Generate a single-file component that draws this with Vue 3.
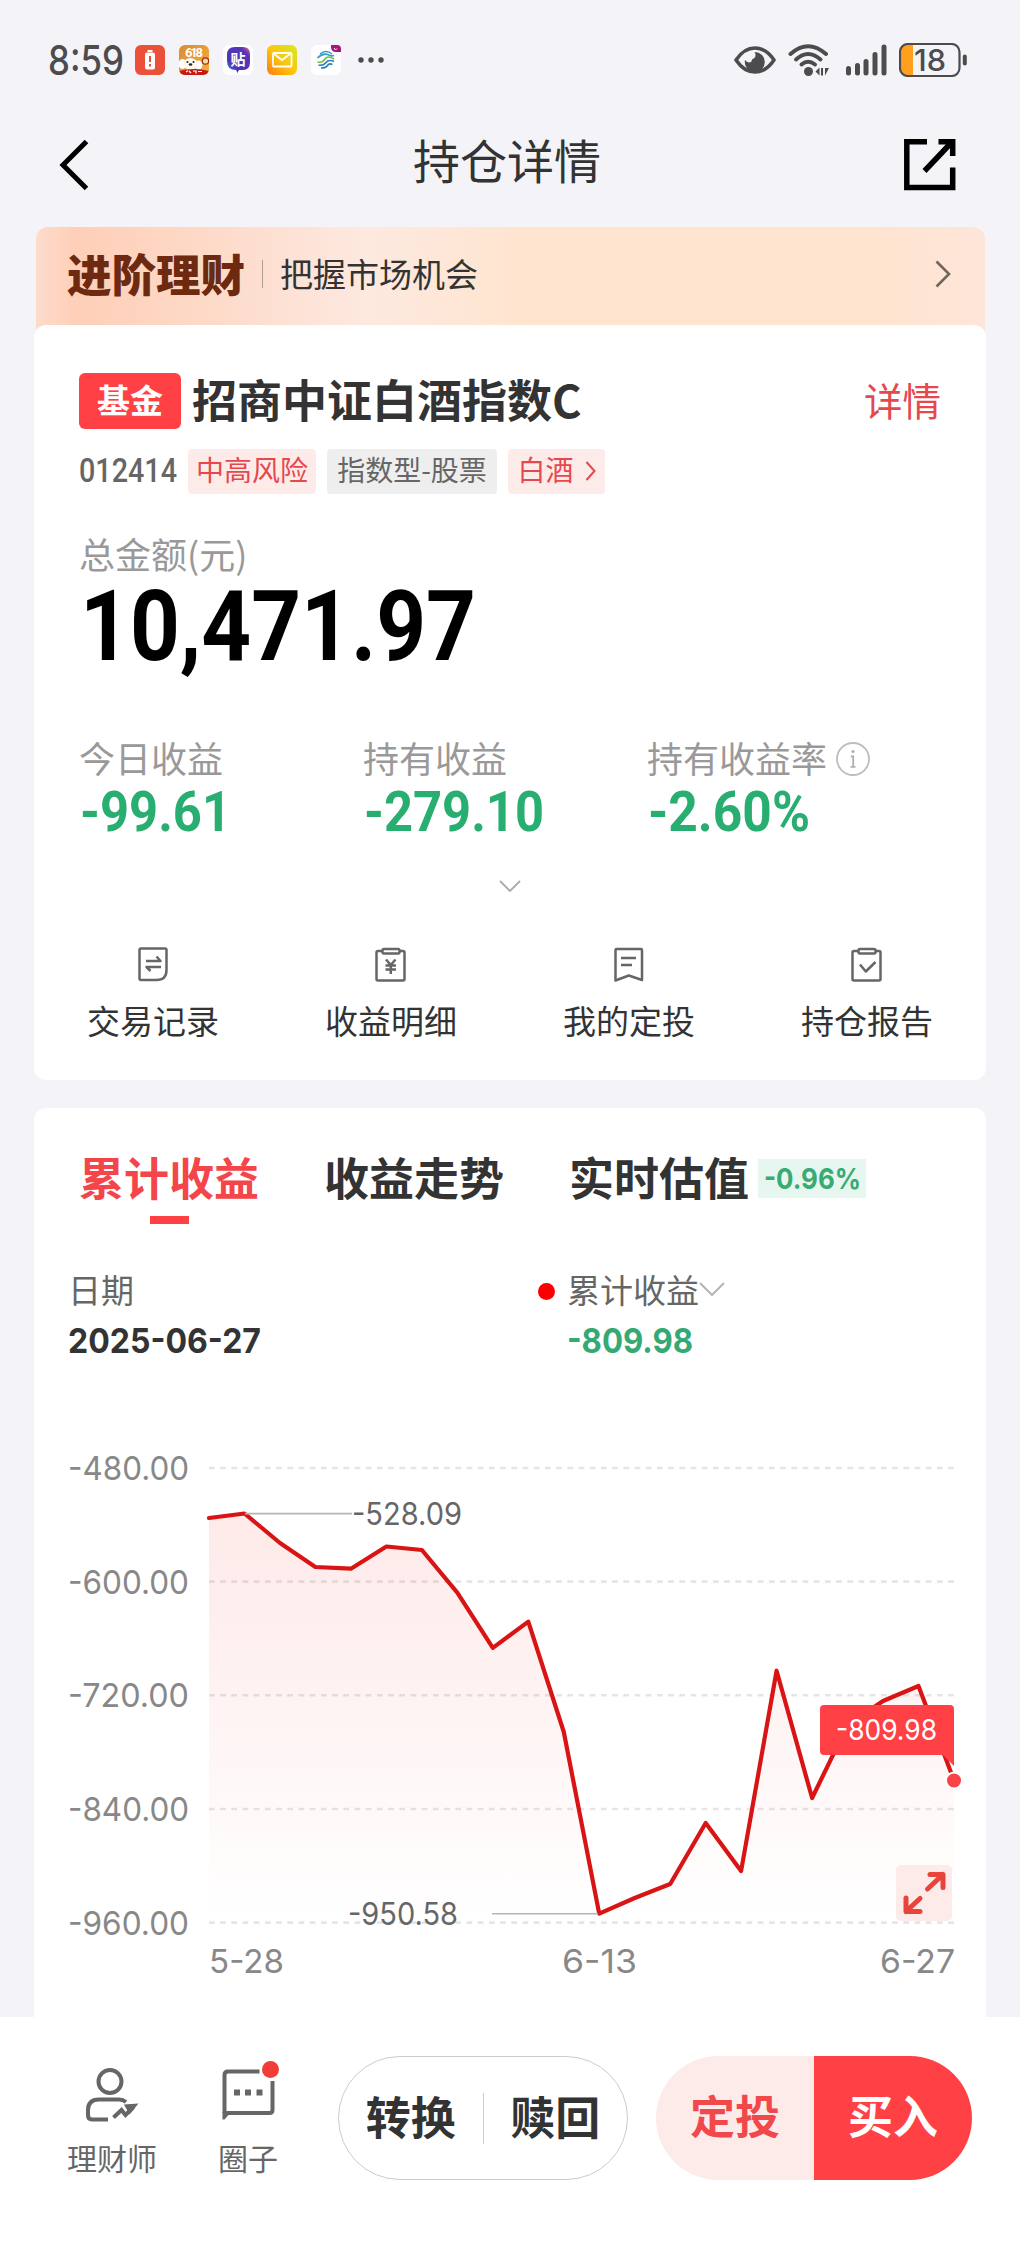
<template>
  <div class="screen">
    <header class="status-bar">
      <fit-text class="clock" text="8:59" :width="76" :height="30" />
      <div class="app-icons">
        <svg width="30" height="30" viewBox="0 0 30 30">
          <rect width="30" height="30" rx="6" fill="#ea5138" />
          <rect x="12.5" y="5" width="5" height="2" fill="#fff" />
          <rect x="10" y="7.5" width="10" height="17" rx="2" fill="#fff" />
          <path d="M15 11v6M15 19v2.5" stroke="#ea5138" stroke-width="2" />
        </svg>
        <svg width="30" height="30" viewBox="0 0 30 30">
          <defs>
            <linearGradient id="promoBg" x1="0" y1="0" x2="1" y2="1">
              <stop offset="0" stop-color="#dc8a35" />
              <stop offset="1" stop-color="#f4b03a" />
            </linearGradient>
            <clipPath id="promoClip"><rect width="30" height="30" rx="6" /></clipPath>
          </defs>
          <g clip-path="url(#promoClip)">
            <rect width="30" height="30" fill="url(#promoBg)" />
            <text x="6" y="12" class="promo-number" textLength="18">618</text>
            <ellipse cx="3.5" cy="19" rx="4" ry="5" fill="#fff" />
            <ellipse cx="19.5" cy="20" rx="4" ry="4.5" fill="#fff" />
            <ellipse cx="11.5" cy="19" rx="7" ry="6" fill="#fffaf0" />
            <circle cx="8.5" cy="17" r="1" fill="#222" />
            <circle cx="14.5" cy="17" r="1" fill="#222" />
            <ellipse cx="11.5" cy="19.5" rx="1.8" ry="1.2" fill="#222" />
            <circle cx="26.5" cy="16" r="3.2" fill="#f7d9a0" stroke="#9c2a14" stroke-width="1.2" />
            <path d="M0 26q15-4 30 0v4H0z" fill="#c31a14" />
            <path d="M7 27l2-1.5M10 26l2 2M14 26h3v2.5M19 26.5h4" stroke="#fff" stroke-width="1.2" fill="none" />
          </g>
        </svg>
        <svg width="30" height="30" viewBox="0 0 30 30">
          <defs>
            <linearGradient id="barBg" x1="0" y1="1" x2="1" y2="0">
              <stop offset="0" stop-color="#2a8cf5" />
              <stop offset="0.3" stop-color="#4b35b8" />
              <stop offset="0.8" stop-color="#5a35b5" />
              <stop offset="1" stop-color="#ff6a7a" />
            </linearGradient>
          </defs>
          <rect width="30" height="30" rx="6" fill="#fff" />
          <path d="M12 2h8q7 0 7 7v8q0 8-7 8h-4l-1.500 3-1.500-3q-9 0-9-9v-6q0-8 8-8z" fill="url(#barBg)" />
          <text x="7.500" y="19.500" class="bar-glyph">贴</text>
        </svg>
        <svg width="30" height="30" viewBox="0 0 30 30">
          <defs>
            <linearGradient id="mailBg" x1="0" y1="1" x2="1" y2="0">
              <stop offset="0" stop-color="#ff7a0a" />
              <stop offset="0.5" stop-color="#fcc70d" />
              <stop offset="1" stop-color="#d3ea1e" />
            </linearGradient>
          </defs>
          <rect width="30" height="30" rx="6" fill="url(#mailBg)" />
          <rect x="6" y="8" width="18.5" height="13.5" rx="1" fill="none" stroke="#fff" stroke-width="1.8" />
          <path d="M7 9l8 6 8-6" fill="none" stroke="#fff" stroke-width="1.8" />
        </svg>
        <svg width="30" height="30" viewBox="0 0 30 30">
          <rect width="30" height="30" rx="6" fill="#fff" />
          <g fill="none" stroke-width="1.6">
            <path d="M9 9q6-5 12 0M6.500 13q5-5 10-3.500 4 2 6.500 1" stroke="#2f9bd0" />
            <path d="M6.500 17q5 1 7.500-3t9 0" stroke="#7dba4c" />
            <path d="M7.500 20q5 1 7.500-2.500t8-1M10 23q5 0 6.500-2.500t5-1" stroke="#2680c0" />
          </g>
          <path d="M20 0h6q4 0 4 4v3h-5q-5 0-5-5z" fill="#a8157c" />
          <path d="M23 3l1.500 2L26 3.500" stroke="#fff" fill="none" />
        </svg>
      </div>
      <svg class="more-dots" width="26" height="6" viewBox="0 0 26 6">
        <circle cx="3" cy="3" r="2.7" />
        <circle cx="13" cy="3" r="2.7" />
        <circle cx="23" cy="3" r="2.7" />
      </svg>
      <div class="status-right">
        <svg width="42" height="28" viewBox="0 0 42 28">
          <path d="M2 14Q10 2 21 2t19 12Q32 26 21 26T2 14z" fill="none" stroke="#4c4c4e" stroke-width="3.6" stroke-linejoin="round" />
          <path d="M20.500 6A10 10 0 1 1 11 14q3 4 6.500 1.500 0-1.500 1-2.500 3-1 3-4 0-1.800-1-3z" fill="#4c4c4e" />
        </svg>
        <svg class="wifi" width="42" height="32" viewBox="0 0 42 32">
          <g fill="none" stroke="#4c4c4e" stroke-width="4" stroke-linecap="round">
            <path d="M2.500 10Q20 -5.500 38 10" />
            <path d="M8 15.500Q20 4.500 32.500 15.500" />
            <path d="M13.500 20.500q6.500-5.500 13.500 0" />
          </g>
          <circle cx="20.500" cy="27.500" r="4.500" fill="#4c4c4e" />
          <path d="M27.500 27.500l4-4v8zM41 24l-4 7.500V24zM33 24h2v7.500h-2z" fill="#4c4c4e" />
        </svg>
        <svg class="signal" width="41" height="32" viewBox="0 0 41 32">
          <g stroke="#4c4c4e" stroke-width="5" stroke-linecap="round">
            <path d="M2.500 24.500V29M11.500 21.500V29M20 17.500V29M29 10.500V29M38 3V29" />
          </g>
        </svg>
        <svg width="68" height="34" viewBox="0 0 68 34">
          <path d="M9 1.500h5v31H9q-7 0-7-7v-17q0-7 7-7z" fill="#ff9f1e" />
          <rect x="1" y="1" width="59.5" height="32" rx="8" fill="none" stroke="#4c4c4e" stroke-width="2.2" />
          <path d="M65.800 13.500v7" stroke="#4c4c4e" stroke-width="4" stroke-linecap="round" />
          <text x="15" y="28" class="battery-level" textLength="32" lengthAdjust="spacingAndGlyphs">18</text>
        </svg>
      </div>
    </header>

    <nav class="nav-bar">
      <svg width="30" height="52" viewBox="0 0 30 52">
        <path d="M27.500 2.500L4 26l23.500 23.500" fill="none" stroke="#000" stroke-width="5" />
      </svg>
      <h1 class="nav-title">持仓详情</h1>
      <svg width="52" height="52" viewBox="0 0 52 52" fill="none" stroke="#000" stroke-width="5.5">
        <path d="M23 2.800H2.800V48.500H48.700V28.500" />
        <path d="M34.500 2.800H48.700V17" />
        <path d="M47 4L20.500 32" />
      </svg>
    </nav>

    <section class="banner">
      <span class="banner-title">进阶理财</span>
      <span class="banner-line"></span>
      <span class="banner-text">把握市场机会</span>
      <svg class="banner-arrow" width="16" height="28" viewBox="0 0 16 28">
        <path d="M1.500 1.500L14 14 1.500 26.500" fill="none" stroke="#6f655c" stroke-width="2.6" />
      </svg>
    </section>

    <section class="card summary">
      <div class="fund-head">
        <span class="fund-type">基金</span>
        <h2 class="fund-name">招商中证白酒指数C</h2>
        <span class="fund-link">详情</span>
      </div>
      <div class="fund-tags">
        <fit-text class="fund-code" text="012414" :width="98" :height="24" />
        <span class="tag tag-risk">中高风险</span>
        <span class="tag tag-kind">指数型-股票</span>
        <span class="tag tag-theme">
          白酒
          <svg width="11" height="20" viewBox="0 0 11 20">
            <path d="M1.500 1L9.500 10l-8 9" fill="none" stroke="#e5484d" stroke-width="2" />
          </svg>
        </span>
      </div>
      <p class="total-label">总金额(元)</p>
      <fit-text class="total-value" text="10,471.97" :width="396" :height="70" />

      <div class="stats">
        <div v-for="item in stats" :key="item.label" class="stat">
          <div class="stat-label">
            {{ item.label }}
            <svg v-if="item.info" class="stat-info" width="34" height="34" viewBox="0 0 34 34">
              <circle cx="17" cy="17" r="16" fill="none" stroke="#bdbdbd" stroke-width="1.8" />
              <circle cx="17" cy="9.5" r="1.6" fill="#b0b0b0" />
              <path d="M14.800 14.500h2.400v10M14.500 24.800h5" fill="none" stroke="#b0b0b0" stroke-width="1.8" />
            </svg>
          </div>
          <fit-text class="stat-value" :text="item.value" :width="item.width" :height="39" />
        </div>
      </div>

      <svg class="expand-arrow" width="22" height="12" viewBox="0 0 22 12">
        <path d="M1 1l10 10L21 1" fill="none" stroke="#aaa" stroke-width="1.8" />
      </svg>

      <div class="shortcuts">
        <div v-for="item in shortcuts" :key="item.label" class="shortcut">
          <svg width="32" height="35" viewBox="0 0 32 35" fill="none" stroke="#666" stroke-width="2.5" stroke-linejoin="round">
            <template v-if="item.icon === 'record'">
              <path d="M4 1.500h24q1.500 0 1.500 1.500v20q0 10-10 10H4q-1.500 0-1.500-1.500V3q0-1.500 1.500-1.500z" />
              <path d="M9 14h14.500l-4-4.500M24 20H9.500l4 4" />
            </template>
            <template v-else-if="item.icon === 'profit'">
              <rect x="1.5" y="4" width="28" height="29.5" rx="1.5" />
              <rect x="7.5" y="2" width="17" height="4.5" rx="1.5" fill="#fff" />
              <path d="M11 12.500l4.800 5.500 4.700-5.500M15.800 18v9M10.500 18.500h10.500M10.500 22.500h10.500" />
            </template>
            <template v-else-if="item.icon === 'plan'">
              <path d="M3 2h25q1 0 1 1v30l-13.200-4.500L2.500 33.500V3z" />
              <path d="M8 11h15M8 18h11" />
            </template>
            <template v-else>
              <rect x="1.5" y="4" width="28" height="29.5" rx="1.5" />
              <rect x="7.5" y="2" width="17" height="4.5" rx="1.5" fill="#fff" />
              <path d="M9 17.500l5.800 7L24.500 15" />
            </template>
          </svg>
          <span class="shortcut-label">{{ item.label }}</span>
        </div>
      </div>
    </section>

    <section class="card trend">
      <div class="tabs">
        <div
          v-for="(tab, index) in tabs"
          :key="tab"
          class="tab"
          :class="{ active: index === activeTab }"
          @click="activeTab = index"
        >
          {{ tab }}
        </div>
        <span class="estimate">
          <fit-text text="-0.96%" :width="97" :height="21" />
        </span>
      </div>

      <div class="legend">
        <div class="legend-col">
          <span class="legend-label">日期</span>
          <fit-text class="legend-date" text="2025-06-27" :width="193" :height="25" />
        </div>
        <div class="legend-col">
          <span class="legend-label">
            <i class="legend-dot"></i>
            累计收益
            <svg width="26" height="14" viewBox="0 0 26 14">
              <path d="M1 1l12 12L25 1" fill="none" stroke="#b5b5b5" stroke-width="2" />
            </svg>
          </span>
          <fit-text class="legend-value" text="-809.98" :width="126" :height="25" />
        </div>
      </div>

      <svg class="chart" width="952" height="577" viewBox="0 0 952 577">
        <defs>
          <linearGradient id="areaFill" gradientUnits="userSpaceOnUse" x1="0" y1="73" x2="0" y2="482">
            <stop offset="0" stop-color="#f03c32" stop-opacity="0.11" />
            <stop offset="1" stop-color="#f03c32" stop-opacity="0" />
          </linearGradient>
        </defs>
        <g v-for="tick in yTicks" :key="tick">
          <text class="axis-text" x="34" :y="toY(tick) + 12" textLength="121" lengthAdjust="spacingAndGlyphs">{{ tick.toFixed(2) }}</text>
          <line class="grid-line" :x1="plotLeft" :x2="plotRight" :y1="toY(tick)" :y2="toY(tick)" />
        </g>
        <polygon :points="areaPoints" fill="url(#areaFill)" />
        <polyline :points="linePoints" class="line" />
        <path d="M211 73.600h107M458 473.700h106" stroke="#b5b5b5" stroke-width="1.6" />
        <text class="note-text" x="318" y="85" textLength="110" lengthAdjust="spacingAndGlyphs">-528.09</text>
        <text class="note-text" x="314" y="485" textLength="110" lengthAdjust="spacingAndGlyphs">-950.58</text>
        <text class="axis-text" x="175" y="533" textLength="75" lengthAdjust="spacingAndGlyphs">5-28</text>
        <text class="axis-text" x="528" y="533" textLength="75" lengthAdjust="spacingAndGlyphs">6-13</text>
        <text class="axis-text" x="846" y="533" textLength="75" lengthAdjust="spacingAndGlyphs">6-27</text>
        <circle :cx="plotRight" :cy="toY(-809.98)" r="9" fill="#fff" />
        <circle :cx="plotRight" :cy="toY(-809.98)" r="7" fill="#fa4347" />
        <path d="M790 265h126q4 0 4 4v57l-11-11H790q-4 0-4-4v-42q0-4 4-4z" fill="#ff4145" />
        <text class="tip-text" x="802" y="300" textLength="101" lengthAdjust="spacingAndGlyphs">-809.98</text>
        <rect x="862" y="425" width="56" height="56" rx="5" fill="#fdebea" />
        <g fill="none" stroke="#e8443a" stroke-width="5" stroke-linecap="round" stroke-linejoin="round">
          <path d="M896 434.500h13v13M909 434.500l-15.500 14.500" />
          <path d="M872 458v13.500h14M872 471.500l14-13" />
        </g>
      </svg>
    </section>

    <footer class="action-bar">
      <div class="action-item advisor">
        <svg width="54" height="56" viewBox="0 0 54 56" fill="none" stroke="#666" stroke-width="4">
          <circle cx="25" cy="14.5" r="11.5" />
          <path d="M41 35q-3-2.500-7-2.500H14Q3 32.500 3 43v5q0 4.500 4 4.500h16" />
          <path d="M28.500 50.500l8-7.500 4 5 8-8" />
          <path d="M39 37.500l14.500-1-9 11z" fill="#666" stroke="none" />
        </svg>
        <span>理财师</span>
      </div>
      <div class="action-item circle">
        <svg width="58" height="60" viewBox="0 0 58 60" fill="none" stroke="#666" stroke-width="4">
          <path d="M37.500 10.500H6q-3.500 0-3.500 3.500v38M50.500 20v29q0 3-3 3H3" />
          <path d="M.500 51h8.500l-6.500 7.500h-2z" fill="#666" stroke="none" />
          <path d="M12 31.500h6M23 31.500h6M34.500 31.500h6" stroke-width="6" />
          <circle cx="48.5" cy="8.5" r="8.5" fill="#f23d36" stroke="none" />
        </svg>
        <span>圈子</span>
      </div>
      <div class="pill pill-plain">
        <button>转换</button>
        <button>赎回</button>
      </div>
      <div class="pill pill-primary">
        <button class="invest">定投</button>
        <button class="buy">买入</button>
      </div>
    </footer>
  </div>
</template>

<script setup>
import { ref, computed, h } from 'vue'

// Digits drawn to a fixed width; the box height equals the digit height
const FitText = (props) =>
  h('svg', { width: props.width, height: props.height, overflow: 'visible' }, [
    h(
      'text',
      {
        x: 0,
        y: props.height,
        fill: 'currentColor',
        textLength: props.width,
        lengthAdjust: 'spacingAndGlyphs'
      },
      props.text
    )
  ])
FitText.props = ['text', 'width', 'height']

const stats = [
  { label: '今日收益', value: '-99.61', width: 151 },
  { label: '持有收益', value: '-279.10', width: 180 },
  { label: '持有收益率', value: '-2.60%', width: 162, info: true }
]

const shortcuts = [
  { label: '交易记录', icon: 'record' },
  { label: '收益明细', icon: 'profit' },
  { label: '我的定投', icon: 'plan' },
  { label: '持仓报告', icon: 'report' }
]

const tabs = ['累计收益', '收益走势', '实时估值']
const activeTab = ref(0)

const plotLeft = 175
const plotRight = 920
const yTicks = [-480, -600, -720, -840, -960]
const values = [
  -532.8, -528.09, -559.2, -584.5, -586.3, -562.9, -566.6, -611.7, -670, -642.2, -758.8,
  -950.58, -934, -919.2, -854.8, -905.5, -694, -828.4, -751.4, -726, -710.2, -809.98
]

const toY = (value) => 28 + ((-480 - value) / 120) * 113.65
const toX = (index) => plotLeft + (index * (plotRight - plotLeft)) / (values.length - 1)

const linePoints = computed(() =>
  values.map((v, i) => `${toX(i).toFixed(1)},${toY(v).toFixed(1)}`).join(' ')
)
const areaPoints = computed(
  () => `${plotLeft},${toY(-960)} ${linePoints.value} ${plotRight},${toY(-960)}`
)
</script>

<style>
body {
  margin: 0;
  background: #f3f3f8;
}
</style>

<style scoped>
.screen {
  display: flex;
  flex-direction: column;
  width: 1020px;
  height: 2250px;
  overflow: hidden;
  background: #f3f3f8;
  color: #333;
  font-family: "Noto Sans CJK SC", sans-serif;
}

.screen * {
  box-sizing: border-box;
}

svg {
  flex: none;
  display: block;
}

h1,
h2,
p {
  margin: 0;
}

.status-bar {
  flex: none;
  display: flex;
  align-items: center;
  height: 120px;
  padding: 0 53px 0 48px;
}

.clock {
  color: #4c4c4e;
  font-family: Inter, sans-serif;
  font-size: 41px;
  font-weight: 500;
}

.app-icons {
  display: flex;
  gap: 14px;
  margin-left: 11px;
}

.promo-number {
  fill: #fff;
  font: 700 13px Roboto, sans-serif;
}

.bar-glyph {
  fill: #fff;
  font-size: 15px;
  font-weight: 700;
}

.more-dots {
  margin-left: 17px;
  fill: #4c4c4e;
}

.status-right {
  display: flex;
  align-items: center;
  margin-left: auto;
}

.wifi {
  margin-left: 12px;
}

.signal {
  margin: 0 12px 0 16px;
}

.battery-level {
  fill: #4c4c4e;
  font: 500 30px Inter, sans-serif;
}

.nav-bar {
  flex: none;
  display: flex;
  align-items: center;
  justify-content: space-between;
  height: 90px;
  padding: 0 64px 0 59px;
}

.nav-title {
  padding: 0 0 12px 21px;
  font-size: 47px;
  font-weight: 400;
  line-height: 60px;
}

.banner {
  flex: none;
  display: flex;
  align-items: center;
  height: 112px;
  margin: 17px 35px -14px 36px;
  padding: 0 34px 18px 31px;
  border-radius: 12px 12px 0 0;
  background: linear-gradient(90deg, #fddccb 0, #ffcfb8 40px, #fdd8c5 150px, #fde9e0 330px, #ffe5d0 480px, #ffe4cf 840px, #fde5d8 100%);
}

.banner-title {
  padding-bottom: 3px;
  color: #6e2911;
  font-size: 44.5px;
  font-weight: 900;
  line-height: 60px;
}

.banner-line {
  width: 1px;
  height: 28px;
  margin: 0 17px;
  background: #b09a8e;
}

.banner-text {
  padding-bottom: 2px;
  font-size: 33px;
  line-height: 50px;
}

.banner-arrow {
  margin-left: auto;
}

.card {
  flex: none;
  width: 952px;
  margin: 0 34px;
  border-radius: 12px;
  background: #fff;
}

.summary {
  display: flex;
  flex-direction: column;
  height: 755px;
  padding-top: 48px;
}

.fund-head {
  display: flex;
  align-items: center;
  height: 56px;
  padding: 0 45px;
}

.fund-type {
  width: 102px;
  height: 56px;
  border-radius: 6px;
  background: #ff4145;
  color: #fff;
  font-size: 33px;
  font-weight: 700;
  line-height: 53px;
  text-align: center;
}

.fund-name {
  margin-left: 11px;
  padding-bottom: 4px;
  font-size: 45px;
  font-weight: 700;
  line-height: 52px;
}

.fund-link {
  margin-left: auto;
  padding-bottom: 4px;
  color: #e5484d;
  font-size: 38.5px;
  line-height: 52px;
}

.fund-tags {
  display: flex;
  align-items: center;
  height: 45px;
  margin-top: 20px;
  padding-left: 45px;
}

.fund-code {
  margin: 0 11px 3px 0;
  color: #666;
  font-family: Roboto, sans-serif;
  font-size: 34px;
  font-weight: 500;
}

.tag {
  display: flex;
  align-items: center;
  justify-content: center;
  height: 45px;
  margin-right: 11px;
  padding-bottom: 5px;
  border-radius: 4px;
  background: #fdebea;
  color: #e5484d;
  font-size: 28px;
  line-height: 40px;
}

.tag-risk {
  width: 128px;
}

.tag-kind {
  width: 170px;
  background: #eee;
  color: #666;
}

.tag-theme {
  gap: 11px;
  width: 97px;
}

.tag-theme svg {
  margin-top: 4px;
}

.total-label {
  margin: 39px 0 0 45px;
  color: #999;
  font-size: 36px;
  line-height: 40px;
}

.total-value {
  margin: 17px 0 0 46px;
  color: #000;
  font-family: Roboto, sans-serif;
  font-size: 98px;
  font-weight: 700;
}

.stats {
  display: flex;
  margin: 77px 0 0 45px;
}

.stat {
  width: 284px;
}

.stat-label {
  display: flex;
  align-items: center;
  height: 40px;
  color: #999;
  font-size: 36px;
  line-height: 40px;
  white-space: nowrap;
}

.stat-info {
  margin: 4px 0 0 9px;
}

.stat-value {
  margin: 15px 0 0 1px;
  color: #27ae70;
  font-family: Roboto, sans-serif;
  font-size: 55px;
  font-weight: 700;
}

.expand-arrow {
  margin: 49px auto 0;
}

.shortcuts {
  display: flex;
  margin-top: 55px;
}

.shortcut {
  flex: 1;
  display: flex;
  flex-direction: column;
  align-items: center;
}

.shortcut-label {
  margin-top: 18px;
  font-size: 33px;
  line-height: 40px;
}

.trend {
  height: 909px;
  margin-top: 28px;
  border-radius: 12px 12px 0 0;
}

.tabs {
  display: flex;
  height: 116px;
  padding: 39px 0 0 45px;
}

.tab {
  display: flex;
  flex-direction: column;
  align-items: center;
  margin-right: 65px;
  font-size: 45px;
  font-weight: 700;
  line-height: 60px;
}

.tab:nth-child(3) {
  margin-right: 0;
}

.tab.active {
  color: #f4464a;
}

.tab.active::after {
  content: "";
  width: 39px;
  height: 8px;
  margin-top: 9px;
  background: #ff4145;
}

.estimate {
  display: flex;
  align-items: center;
  justify-content: center;
  width: 108px;
  height: 39px;
  margin: 12px 0 0 9px;
  background: #e7f7f0;
  color: #38aa74;
  font-family: Inter, sans-serif;
  font-size: 29px;
  font-weight: 700;
}

.legend {
  display: flex;
  height: 216px;
  padding: 45px 0 0 34px;
}

.legend-col {
  display: flex;
  flex-direction: column;
}

.legend-col:first-child {
  width: 470px;
}

.legend-label {
  display: flex;
  align-items: center;
  color: #666;
  font-size: 33px;
  line-height: 40px;
}

.legend-dot {
  width: 17px;
  height: 17px;
  margin: 4px 12px 0 0;
  border-radius: 50%;
  background: #fa0000;
}

.legend-date,
.legend-value {
  margin-top: 19px;
  font-family: Inter, sans-serif;
  font-size: 34.5px;
  font-weight: 700;
}

.legend-value {
  margin-left: 29px;
  color: #35a974;
}

.axis-text,
.note-text,
.tip-text {
  font-family: Inter, sans-serif;
  font-size: 33px;
}

.axis-text {
  fill: #888;
}

.note-text {
  fill: #666;
  font-size: 31px;
}

.tip-text {
  fill: #fff;
  font-size: 29px;
}

.grid-line {
  stroke: #e5e5e5;
  stroke-width: 2.6;
  stroke-dasharray: 5.6 5.6;
}

.line {
  fill: none;
  stroke: #d81414;
  stroke-width: 4.2;
  stroke-linejoin: round;
  stroke-linecap: round;
}

.action-bar {
  flex: none;
  display: flex;
  align-items: flex-start;
  height: 233px;
  background: #fff;
}

.action-item {
  display: flex;
  flex-direction: column;
  align-items: center;
  width: 90px;
  color: #666;
  font-size: 30px;
  line-height: 40px;
}

.advisor {
  margin: 50px 0 0 67px;
}

.advisor span {
  margin-top: 14px;
}

.circle {
  margin: 44px 0 0 46px;
}

.circle span {
  margin-top: 16px;
}

.circle svg {
  margin-left: 6px;
}

.pill {
  display: flex;
  height: 124px;
  margin-top: 39px;
  border-radius: 62px;
  overflow: hidden;
}

.pill button {
  flex: 1;
  padding: 0 0 7px;
  border: none;
  background: transparent;
  color: #333;
  font-family: inherit;
  font-size: 45px;
  font-weight: 700;
}

.pill-plain {
  align-items: center;
  width: 290px;
  margin-left: 45px;
  border: 1px solid #ccc;
}

.pill-plain button {
  height: 51px;
  padding: 0 0 5px;
  line-height: 46px;
}

.pill-plain button + button {
  border-left: 1px solid #ccc;
}

.pill-primary {
  width: 316px;
  margin-left: 28px;
}

.pill-primary .invest {
  background: #fdebea;
  color: #f0484b;
}

.pill-primary .buy {
  background: #ff4145;
  color: #fff;
}
</style>
